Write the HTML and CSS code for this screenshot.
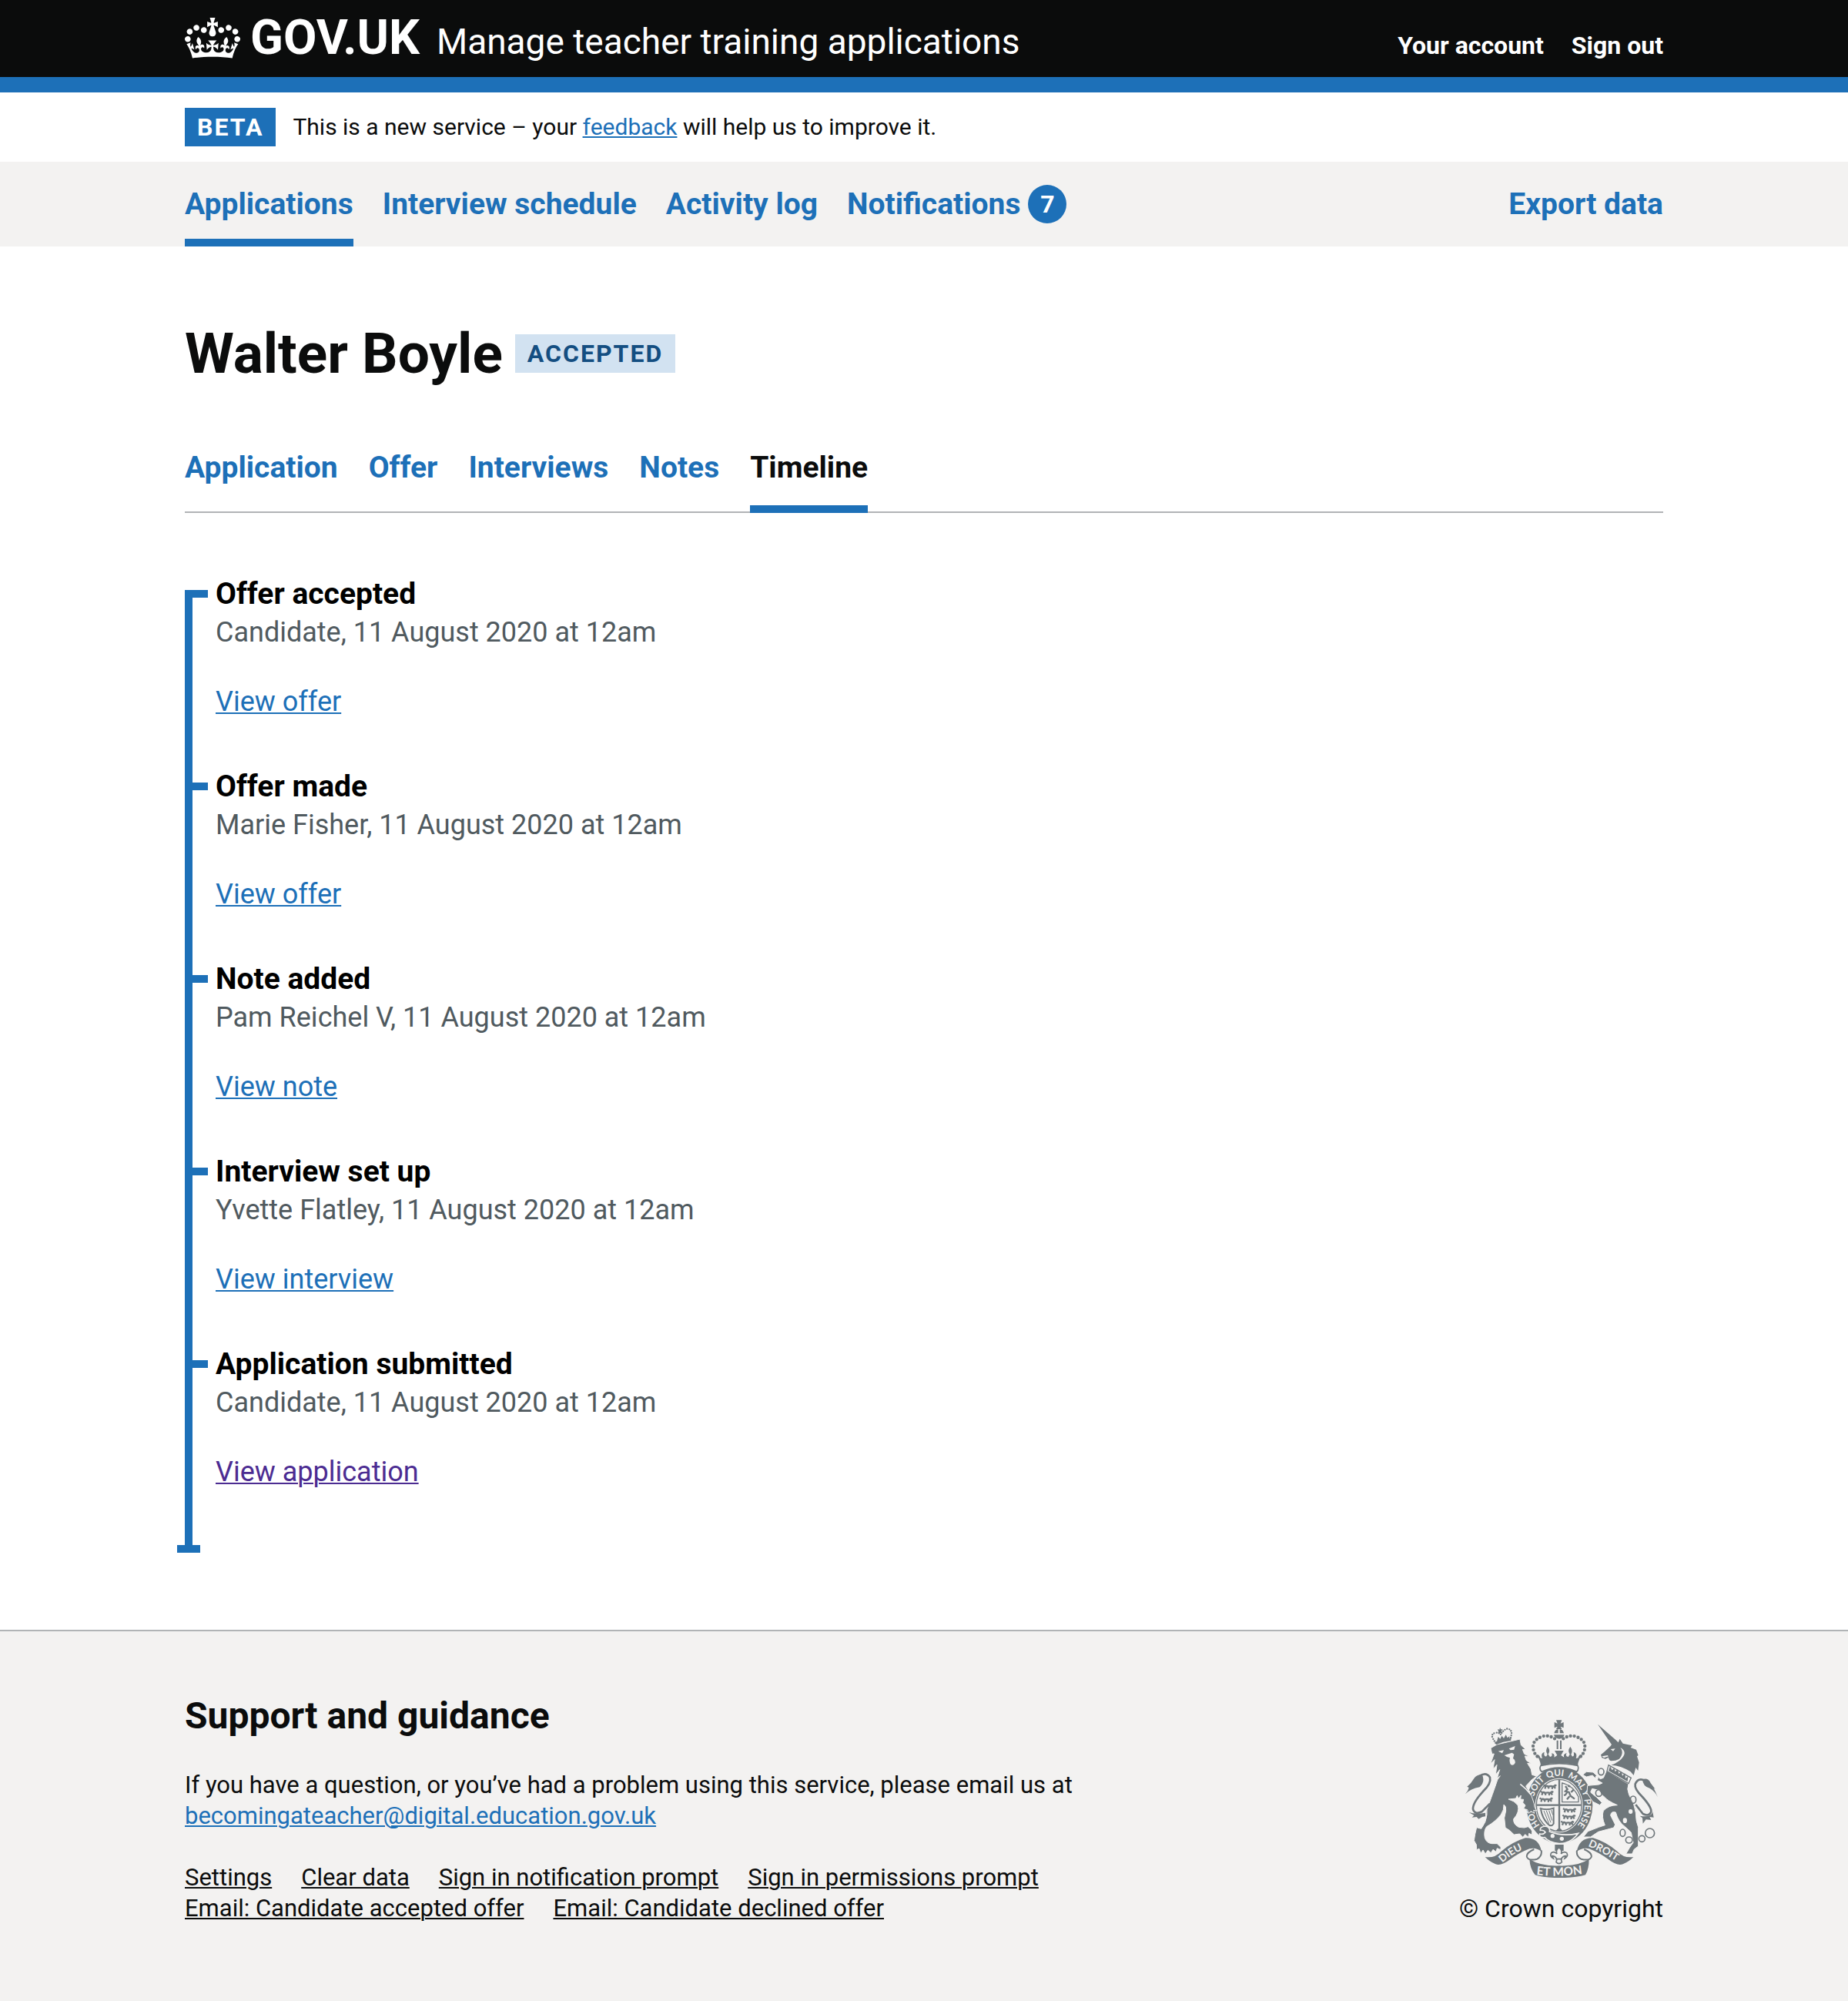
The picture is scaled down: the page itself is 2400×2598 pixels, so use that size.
FILE: index.html
```
<!DOCTYPE html>
<html lang="en">
<head>
<meta charset="utf-8">
<meta name="viewport" content="width=device-width, initial-scale=1">
<title>Walter Boyle – Timeline – Manage teacher training applications</title>
<link rel="stylesheet" href="styles.css">
</head>
<body>
<header class="header">
  <div class="container header-row">
    <a class="logo" href="#">
      <svg class="logo-crown" viewBox="0 0 132 97" aria-hidden="true"><path fill="currentColor" fill-rule="evenodd" d="M25 30.2c3.5 1.5 7.7-.2 9.1-3.7 1.5-3.6-.2-7.8-3.9-9.2-3.6-1.4-7.6.3-9.1 3.9-1.4 3.5.3 7.5 3.9 9zM9 39.5c3.6 1.5 7.8-.2 9.2-3.7 1.5-3.6-.2-7.8-3.9-9.1-3.6-1.5-7.6.2-9.1 3.8-1.4 3.5.3 7.5 3.8 9zM4.4 57.2c3.5 1.5 7.7-.2 9.1-3.8 1.5-3.6-.2-7.7-3.9-9.1-3.5-1.5-7.6.3-9.1 3.8-1.4 3.5.3 7.6 3.9 9.1zm38.3-21.4c3.5 1.5 7.7-.2 9.1-3.8 1.5-3.6-.2-7.7-3.9-9.1-3.6-1.5-7.6.3-9.1 3.8-1.3 3.6.4 7.7 3.9 9.1zm64.4-5.6c-3.6 1.5-7.8-.2-9.1-3.7-1.5-3.6.2-7.8 3.8-9.2 3.6-1.4 7.7.3 9.2 3.9 1.3 3.5-.4 7.5-3.9 9zm15.9 9.3c-3.6 1.5-7.7-.2-9.1-3.7-1.5-3.6.2-7.8 3.7-9.1 3.6-1.5 7.7.2 9.2 3.8 1.5 3.5-.3 7.5-3.8 9zm4.7 17.7c-3.6 1.5-7.8-.2-9.2-3.8-1.5-3.6.2-7.7 3.9-9.1 3.6-1.5 7.7.3 9.2 3.8 1.3 3.5-.4 7.6-3.9 9.1zM89.3 35.8c-3.6 1.5-7.8-.2-9.2-3.8-1.4-3.6.2-7.7 3.9-9.1 3.6-1.5 7.7.3 9.2 3.8 1.4 3.6-.3 7.7-3.9 9.1zM69.7 17.7l8.9 4.7V9.3l-8.9 2.8c-.2-.3-.5-.6-.9-.9L72.4 0H59.6l3.5 11.2c-.3.3-.6.5-.9.9l-8.8-2.8v13.1l8.8-4.7c.3.3.6.7.9.9l-5 15.4v.1c-.2.8-.4 1.6-.4 2.4 0 4.1 3.1 7.5 7 8.1h.2c.3 0 .7.1 1 .1.4 0 .7 0 1-.1h.2c4-.6 7.1-4.1 7.1-8.1 0-.8-.1-1.7-.4-2.4V34l-5.1-15.4c.4-.2.7-.6 1-.9zM66 92.8c16.9 0 32.8 1.1 47.1 3.2 4-16.9 8.9-26.7 14-33.5l-9.6-3.4c1 4.9 1.1 7.2 0 10.2-1.5-1.4-3-4.3-4.2-8.7L108.6 76c2.8-2 5-3.2 7.5-3.3-4.4 9.4-10 11.9-13.6 11.2-4.3-.8-6.3-4.6-5.6-7.9 1-4.7 5.7-5.9 8-.5 4.3-8.7-3-11.4-7.6-8.8 7.1-7.2 7.9-13.5 2.1-21.1-8 6.1-8.1 12.3-4.5 20.8-4.7-5.4-12.1-2.5-9.5 6.2 3.4-5.2 7.9-2 7.2 3.1-.6 4.3-6.4 7.8-13.5 7.2-10.3-.9-10.9-8-11.2-13.8 2.5-.5 7.1 1.8 11 7.3L80.2 60c-4.1 4.4-8 5.3-12.3 5.4 1.4-4.4 8-11.6 8-11.6H55.5s6.4 7.2 7.9 11.6c-4.2-.1-8-1-12.3-5.4l1.4 16.4c3.9-5.5 8.5-7.7 10.9-7.3-.3 5.8-.9 12.8-11.1 13.8-7.2.6-12.9-2.9-13.5-7.2-.7-5 3.8-8.3 7.1-3.1 2.7-8.7-4.6-11.6-9.4-6.2 3.7-8.5 3.6-14.7-4.6-20.8-5.8 7.6-5 13.9 2.2 21.1-4.7-2.6-11.9.1-7.7 8.8 2.3-5.5 7.1-4.2 8.1.5.7 3.3-1.3 7.1-5.7 7.9-3.5.7-9-1.8-13.5-11.2 2.5.1 4.7 1.3 7.5 3.3l-4.7-15.4c-1.2 4.4-2.7 7.2-4.3 8.7-1.1-3-.9-5.3 0-10.2l-9.5 3.4c5 6.9 9.9 16.7 14 33.5 14.8-2.1 30.8-3.2 47.7-3.2z"/></svg>
      <span class="logo-text">GOV.UK</span>
    </a>
    <a class="service-name" href="#">Manage teacher training applications</a>
    <nav class="account-nav" aria-label="Account">
      <a href="#">Your account</a>
      <a href="#">Sign out</a>
    </nav>
  </div>
</header>

<div class="container phase-banner">
  <strong class="tag">BETA</strong>
  <p class="phase-text">This is a new service – your <a class="link" href="#">feedback</a> will help us to improve it.</p>
</div>

<nav class="primary-nav" aria-label="Primary">
  <div class="container primary-row">
    <a class="primary-link primary-current" href="#" aria-current="page">Applications</a>
    <a class="primary-link" href="#">Interview schedule</a>
    <a class="primary-link" href="#">Activity log</a>
    <a class="primary-link" href="#">Notifications <span class="count">7</span></a>
    <a class="primary-link primary-end" href="#">Export data</a>
  </div>
</nav>

<main class="container main">
  <div class="title-row">
    <h1 class="title">Walter Boyle</h1>
    <strong class="tag tag-accepted">ACCEPTED</strong>
  </div>

  <nav class="tabs" aria-label="Application sections">
    <a class="tab" href="#">Application</a>
    <a class="tab" href="#">Offer</a>
    <a class="tab" href="#">Interviews</a>
    <a class="tab" href="#">Notes</a>
    <a class="tab tab-current" href="#" aria-current="page">Timeline</a>
  </nav>

  <ol class="timeline">
    <li class="event">
      <h2 class="event-title">Offer accepted</h2>
      <p class="event-meta">Candidate, 11 August 2020 at 12am</p>
      <p class="event-action"><a class="link" href="#">View offer</a></p>
    </li>
    <li class="event">
      <h2 class="event-title">Offer made</h2>
      <p class="event-meta">Marie Fisher, 11 August 2020 at 12am</p>
      <p class="event-action"><a class="link" href="#">View offer</a></p>
    </li>
    <li class="event">
      <h2 class="event-title">Note added</h2>
      <p class="event-meta">Pam Reichel V, 11 August 2020 at 12am</p>
      <p class="event-action"><a class="link" href="#">View note</a></p>
    </li>
    <li class="event">
      <h2 class="event-title">Interview set up</h2>
      <p class="event-meta">Yvette Flatley, 11 August 2020 at 12am</p>
      <p class="event-action"><a class="link" href="#">View interview</a></p>
    </li>
    <li class="event">
      <h2 class="event-title">Application submitted</h2>
      <p class="event-meta">Candidate, 11 August 2020 at 12am</p>
      <p class="event-action"><a class="link link-visited" href="#">View application</a></p>
    </li>
  </ol>
</main>

<footer class="footer">
  <div class="container footer-row">
    <div class="footer-main">
      <h2 class="footer-title">Support and guidance</h2>
      <p class="footer-text">If you have a question, or you’ve had a problem using this service, please email us at <a class="link" href="#">becomingateacher@digital.education.gov.uk</a></p>
      <ul class="footer-links">
        <li><a href="#">Settings</a></li>
        <li><a href="#">Clear data</a></li>
        <li><a href="#">Sign in notification prompt</a></li>
        <li><a href="#">Sign in permissions prompt</a></li>
        <li><a href="#">Email: Candidate accepted offer</a></li>
        <li><a href="#">Email: Candidate declined offer</a></li>
      </ul>
    </div>
    <a class="copyright" href="#">
      <svg class="crest" viewBox="72 70 750 615" aria-hidden="true">
        <defs>
          <path id="garter-line" d="M364 482A101 114 0 1 1 500 490"/>
          <path id="dieu-line" d="M216 627Q262 584 322 566"/>
          <path id="mon-line" d="M349 673Q437 684 530 669"/>
          <path id="droit-line" d="M550 562Q606 584 672 628"/>
          <g id="passant"><path d="M0 8q8-6 14 0q10-4 20 0l8-6M4 8l-3 8m12-8l4 8m14-8l-2 9m8-9l5 7M0 4l-4-3m44 1l6 3" fill="none" stroke="#6f777b" stroke-width="7"/></g>
        </defs>
        <!-- garter and shield -->
        <ellipse class="ink" cx="439" cy="402" rx="129" ry="149"/>
        <ellipse class="paper" cx="437" cy="403" rx="93" ry="106"/>
        <ellipse cx="437" cy="403" rx="88" ry="101" fill="none" class="line" stroke-width="4"/>
        <path class="line" fill="none" stroke-width="7" d="M438 302V500M350 402H524"/>
        <use href="#passant" x="381" y="322"/><use href="#passant" x="369" y="347"/><use href="#passant" x="366" y="373"/>
        <use href="#passant" x="457" y="414"/><use href="#passant" x="455" y="440"/><use href="#passant" x="449" y="464"/>
        <path class="line" fill="none" stroke-width="4" d="M449 314V390H515M449 316Q492 325 513 370V390"/>
        <path class="line" fill="none" stroke-width="7" d="M462 328l8 12l-8 8l14 4l6 14l16 12M470 350l-8 12l-6 2m22 4l-10 12m16-28l10-10m-14-12l-8-4"/>
        <path class="line" fill="none" stroke-width="6" d="M362 414Q388 424 416 414V474Q406 490 392 474Q372 452 366 418"/>
        <path class="line" fill="none" stroke-width="3" d="M378 424L398 474M388 424L405 470M398 423L410 462M407 421L413 440"/>
        <path class="ink" d="M424 504h28l-8-10h-12z"/>
        <text class="motto" font-size="35"><textPath href="#garter-line" startOffset="2">HONI</textPath></text>
        <text class="motto" font-size="35"><textPath href="#garter-line" startOffset="120">SOIT</textPath></text>
        <text class="motto" font-size="35"><textPath href="#garter-line" startOffset="210">QUI</textPath></text>
        <text class="motto" font-size="35"><textPath href="#garter-line" startOffset="290">MAL</textPath></text>
        <text class="motto" font-size="35"><textPath href="#garter-line" startOffset="370">Y</textPath></text>
        <text class="motto" font-size="35"><textPath href="#garter-line" startOffset="402">PENSE</textPath></text>
        <path class="ink" stroke="#f3f2f1" stroke-width="5" d="M364 500Q362 486 384 484Q404 488 400 505Q450 526 512 512Q484 552 438 552Q396 546 382 528Q358 530 362 514Q376 518 384 508Q378 498 364 500z"/>
        <circle class="paper" cx="412" cy="522" r="8"/><circle class="paper" cx="448" cy="533" r="8"/>
        <!-- royal crown -->
        <path class="ink" d="M426 71h22l-5 13l12-5v22l-12-5l5 10h-22l5-10l-12 5v-22l12 5z"/>
        <path class="ink" d="M418 124Q420 108 434 106V122H418M456 124Q454 108 440 106V122H456M417 128h41q-3 14-20 16q-18-2-21-16"/>
        <path class="line" stroke-width="6" d="M431 150V184M444 150V184"/>
        <path class="line dots" fill="none" d="M420 143Q395 126 368 136Q328 152 338 188Q342 204 354 214"/>
        <path class="line dots" fill="none" d="M454 143Q479 126 506 136Q546 152 536 188Q532 204 520 214"/>
        <path class="ink" d="M348 206Q362 204 364 218L372 220Q364 200 380 196Q376 214 388 212L392 204Q382 190 393 174Q405 190 395 204L402 214Q414 212 408 200Q422 202 418 216L430 208L420 190H455L445 208L457 216Q452 202 467 200Q460 212 473 214L479 204Q469 190 481 174Q493 190 484 204L488 212Q498 214 494 196Q510 200 503 220L512 218Q514 204 528 206Q512 224 510 248Q438 228 366 248Q364 224 348 206z"/>
        <path class="line" fill="#f3f2f1" stroke-width="5" d="M366 248Q438 232 510 248Q516 262 506 272Q438 240 370 272Q358 262 366 248z"/>
        <!-- scrolls -->
        <path class="ink" d="M421 556h34v24h-34z"/>
        <path class="line" fill="#f3f2f1" stroke-width="5" d="M437 566q14 12 8 26q10-12 22-4q8 14-8 22l4-10q-10 0-18 12l3 12q-11 12-22 0l3-12q-8-12-18-12l4 10q-16-8-8-22q12-8 22 4q-6-14 8-26zM424 612h26"/>
        <path class="line" fill="#f3f2f1" stroke-width="6" d="M340 574Q308 588 312 604Q318 620 352 612Q372 600 368 578M535 574Q567 588 563 604Q557 620 523 612Q503 600 507 578"/>
        <path class="ink" d="M149 604Q186 610 212 582Q258 544 306 530Q360 528 369 584Q350 566 322 572Q280 588 246 614Q212 640 190 632Q166 622 149 604z"/>
        <path class="ink" d="M727 604Q690 610 664 582Q618 544 570 530Q516 528 506 584Q526 566 554 572Q596 588 630 614Q664 640 686 632Q710 622 727 604z"/>
        <path class="ink" d="M322 612Q364 640 438 638Q512 640 554 612Q554 650 540 674Q500 686 438 685Q376 686 344 674Q324 650 322 612z"/>
        <text class="motto" font-size="40"><textPath href="#dieu-line">DIEU</textPath></text>
        <text class="motto" font-size="46"><textPath href="#mon-line">ET MON</textPath></text>
        <text class="motto" font-size="40"><textPath href="#droit-line">DROIT</textPath></text>
        <!-- lion -->
        <path class="ink" stroke="#f3f2f1" stroke-width="3" d="M171 180L195 166L285 145L289 168L308 186L295 185L302 203L324 213L304 211L310 228L330 241L314 239L328 262L332 284L350 289L330 304L308 328L330 366L340 396L342 410L350 424L338 422L341 434L328 426L318 434L314 420L299 416L306 403L296 392L299 380L287 379L289 364L279 377L274 365L269 376L240 379Q264 385 277 403Q284 430 260 456Q258 476 280 488L302 490L316 486L328 496L332 504L332 518L320 512L318 527L305 516L296 527L284 514L262 517L244 500L228 490L224 452L230 424Q232 406 222 400Q224 420 210 440Q190 466 155 486Q143 502 148 530Q155 550 175 552L196 552L210 566L210 576L196 570L192 584L180 575L172 588L160 578L150 592L141 577L132 590L126 572L116 576L115 556L106 540L110 515L116 489L134 494Q154 468 156 440Q152 420 165 395Q178 360 190 325Q196 300 208 288L196 298L206 264L190 284L195 245L180 262L186 225L170 242L184 202L176 203z"/>
        <path class="paper" d="M200 192L222 188L216 200zM242 182L266 172L262 186L248 188zM224 208L254 198L262 204L258 220Q268 226 266 238Q260 250 249 244Q242 232 246 218L234 214z"/>
        <path fill="none" stroke="#f3f2f1" stroke-width="5" d="M286 320Q310 338 328 362"/>
        <path class="line" fill="none" stroke-width="8" d="M128 288Q154 272 168 294Q174 318 140 350Q100 394 102 418Q108 440 136 428L168 396"/>
        <path class="ink" d="M71 360Q84 346 86 334L79 330Q96 316 106 298Q116 282 138 284Q150 312 128 332Q92 338 71 360zM86 430Q110 438 150 432L150 446L138 448L124 456L116 448L98 450L106 442z"/>
        <path class="ink" d="M192 167L188 156Q220 140 250 142L250 151Q220 154 192 167zM196 150l4-14l8 8l6-12l8 10l8-14l6 12l8-6v12q-26 0-48 10zM198 106l7 2l2-8l4 7l7 0l-5 6l2 8l-7 0l-5 5l-1-8z"/>
        <path class="line" fill="none" stroke-width="7" stroke-linecap="round" stroke-dasharray="0 9" d="M190 160L178 140Q172 124 190 120Q206 118 210 128Q218 110 236 104Q254 108 252 126L248 144"/>
        <!-- unicorn -->
        <path class="ink" stroke="#f3f2f1" stroke-width="3" d="M622 268L708 320Q700 338 710 362Q732 396 736 432Q736 464 746 488L746 562L730 574L722 592L698 592L712 568L726 548L718 508L694 486Q668 468 658 430Q640 424 638 442L656 478L650 490L590 506L560 526L532 526L550 504L592 488L616 480Q602 448 610 424Q630 402 664 402Q624 384 616 372Q602 364 592 344L566 338L560 352L584 372L604 392L596 402L568 388L546 354L548 326L592 322L606 316L584 304L568 286L544 292L530 284L544 272L570 274L598 300L610 296z"/>
        <path class="ink" d="M588 87L658 148L668 158L674 144L686 162L722 170L716 178L738 186L746 208L741 212L749 236L745 268L736 256L728 286L716 272Q680 248 640 246Q668 238 688 204Q678 228 640 230Q630 226 630 216L618 222L604 218L600 206L612 196L638 172L642 166z"/>
        <path class="paper" d="M638 184l18-2l-8 10zM604 212l22-4l4 4l-18 6zM676 178Q698 190 690 208Q680 230 642 246Q676 226 682 204Q686 190 676 178z"/>
        <path class="line" fill="#f3f2f1" stroke-width="4" d="M630 246L718 296L708 318L624 270z"/>
        <path class="ink" d="M630 268l6-18l8 16l8-8l4 14l10-10l4 18l10-10l4 18l10-10l2 20l10-8l-2 20z"/>
        <path class="line" fill="none" stroke-width="8" d="M766 304Q744 296 734 320Q730 340 762 370Q798 410 796 428Q788 448 764 436L736 400"/>
        <path class="ink" d="M823 374Q812 348 790 336Q764 330 762 302Q784 294 794 316L812 340L806 336Q814 352 823 374zM802 428Q796 452 752 444L762 452L764 474L776 458L796 460L790 448L806 450z"/>
        <g class="line" fill="none" stroke-width="5"><ellipse cx="601" cy="272" rx="11" ry="13"/><ellipse cx="592" cy="355" rx="12" ry="13"/><ellipse cx="726" cy="381" rx="11" ry="14"/><ellipse cx="685" cy="510" rx="10" ry="14"/><ellipse cx="710" cy="538" rx="13" ry="12"/><ellipse cx="760" cy="533" rx="12" ry="12"/><circle cx="791" cy="511" r="18"/></g>
        <ellipse class="paper" cx="716" cy="427" rx="8" ry="9"/><ellipse class="paper" cx="694" cy="462" rx="8" ry="10"/><ellipse class="paper" cx="584" cy="296" rx="6" ry="9"/>
      </svg>
      <span>© Crown copyright</span>
    </a>
  </div>
</footer>
</body>
</html>
```
FILE: styles.css
```
* {
  box-sizing: border-box;
}

body {
  margin: 0;
  background: #fff;
  color: #0b0c0c;
  font: 400 31px/40px Roboto, "Liberation Sans", sans-serif;
}

h1, h2, p, ol, ul {
  margin: 0;
  padding: 0;
}

ol, ul {
  list-style: none;
}

.container {
  max-width: 1980px;
  margin: 0 auto;
  padding-left: 30px;
  padding-right: 30px;
}

.link {
  color: #1d70b8;
  text-decoration-thickness: 2px;
  text-underline-offset: 2px;
}

.link-visited {
  color: #4c2c92;
}

.tag {
  padding: 0 16px;
  background: #1d70b8;
  color: #fff;
  font-size: 32px;
  font-weight: 700;
  line-height: 50px;
  letter-spacing: 2px;
}

.tag-accepted {
  background: #d2e2f1;
  color: #144e81;
}

/* Header */
.header {
  background: #0b0c0c;
  border-bottom: 20px solid #1d70b8;
}

.header-row {
  display: flex;
  align-items: baseline;
  padding-top: 10px;
  padding-bottom: 12px;
  line-height: 50px;
}

.header a {
  color: #fff;
  text-decoration: none;
}

.header .logo {
  display: flex;
  align-items: baseline;
  gap: 13px;
  margin-right: 22px;
  line-height: 78px;
}

.logo-crown {
  align-self: center;
  width: 72px;
  height: 53px;
}

.logo-text {
  font-size: 63px;
  font-weight: 700;
}

.service-name {
  font-size: 46px;
}

.account-nav {
  display: flex;
  gap: 36px;
  margin-left: auto;
  font-size: 32px;
  font-weight: 700;
}

/* Phase banner */
.phase-banner {
  display: flex;
  align-items: center;
  gap: 22px;
  padding-top: 20px;
  padding-bottom: 20px;
}

.phase-text {
  font-size: 30px;
}

/* Primary navigation */
.primary-nav {
  background: #f3f2f1;
}

.primary-row {
  display: flex;
  gap: 38px;
}

.primary-link {
  display: flex;
  align-items: center;
  gap: 10px;
  height: 110px;
  border-top: 10px solid transparent;
  border-bottom: 10px solid transparent;
  color: #1d70b8;
  font-size: 39px;
  font-weight: 700;
  text-decoration: none;
}

.primary-current {
  border-bottom-color: #1d70b8;
}

.primary-end {
  margin-left: auto;
}

.count {
  width: 50px;
  border-radius: 50%;
  background: #1d70b8;
  color: #fff;
  font-size: 32px;
  line-height: 50px;
  text-align: center;
}

/* Page */
.main {
  padding-top: 100px;
  padding-bottom: 100px;
}

.title-row {
  display: flex;
  align-items: center;
  gap: 16px;
  margin-bottom: 50px;
}

.title {
  font-size: 73px;
  font-weight: 700;
  line-height: 78px;
}

.tabs {
  display: flex;
  gap: 40px;
  margin-bottom: 80px;
  box-shadow: inset 0 -2px #b1b4b6;
}

.tab {
  height: 118px;
  border-top: 10px solid transparent;
  border-bottom: 10px solid transparent;
  color: #1d70b8;
  font-size: 39px;
  font-weight: 700;
  line-height: 98px;
  text-decoration: none;
}

.tab-current {
  border-bottom-color: #1d70b8;
  color: #0b0c0c;
}

/* Timeline */
.timeline {
  position: relative;
  padding: 0 0 20px 40px;
}

.timeline::before {
  content: "";
  position: absolute;
  top: 20px;
  bottom: 0;
  left: 0;
  width: 10px;
  background: #1d70b8;
}

.timeline::after {
  content: "";
  position: absolute;
  bottom: 0;
  left: -10px;
  width: 30px;
  height: 10px;
  background: #1d70b8;
}

.event {
  position: relative;
  padding-bottom: 60px;
  font-size: 36px;
  line-height: 50px;
}

.event::before {
  content: "";
  position: absolute;
  top: 20px;
  left: -40px;
  width: 30px;
  height: 10px;
  background: #1d70b8;
}

.event-title {
  color: #000;
  font-size: 39px;
  font-weight: 700;
}

.event-meta {
  margin-bottom: 40px;
  color: #505a5f;
}

/* Footer */
.footer {
  border-top: 2px solid #b1b4b6;
  background: #f3f2f1;
}

.footer-row {
  display: flex;
  align-items: flex-end;
  justify-content: space-between;
  padding-top: 80px;
  padding-bottom: 100px;
}

.footer-main {
  max-width: 1220px;
}

.footer-title {
  margin-bottom: 40px;
  font-size: 48px;
  font-weight: 700;
  line-height: 60px;
}

.footer-text {
  margin-bottom: 40px;
}

.footer-links {
  display: flex;
  flex-wrap: wrap;
  column-gap: 38px;
}

.footer-links a {
  color: #0b0c0c;
  text-decoration-thickness: 2px;
  text-underline-offset: 2px;
}

.copyright {
  display: flex;
  flex-direction: column;
  align-items: center;
  gap: 20px;
  color: #0b0c0c;
  font-size: 32px;
  text-decoration: none;
}

.crest {
  width: 250px;
  height: 205px;
}

.ink {
  fill: #6f777b;
}

.paper {
  fill: #f3f2f1;
}

.line {
  stroke: #6f777b;
}

.dots {
  stroke-width: 13px;
  stroke-linecap: round;
  stroke-dasharray: 0 15;
}

.motto {
  fill: #f3f2f1;
  font-family: Lato, "Liberation Sans", sans-serif;
  font-weight: 700;
}
```
